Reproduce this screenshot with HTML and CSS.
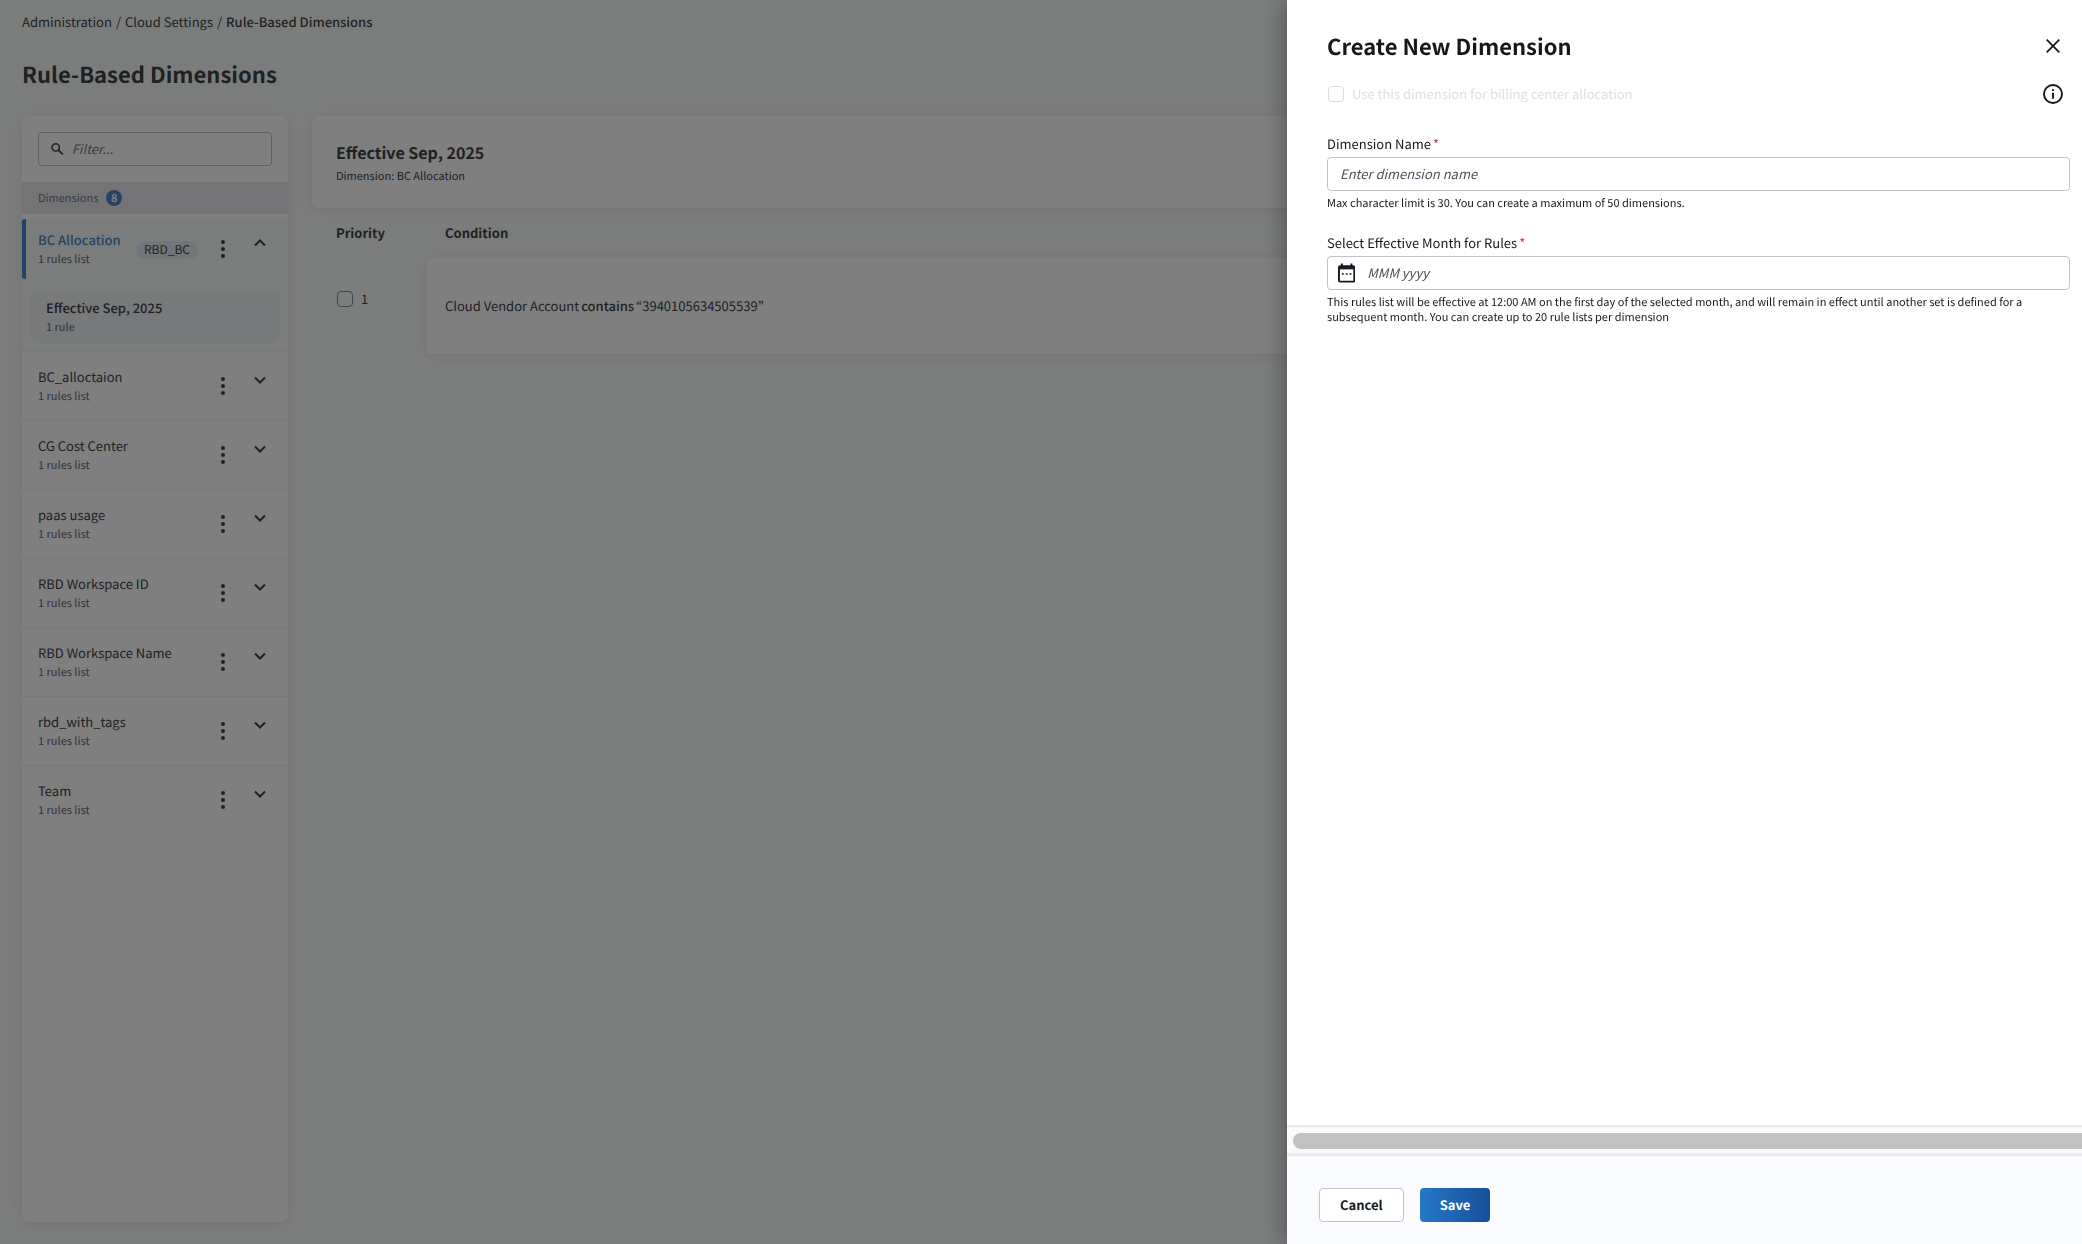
FILE: index.html
```
<!DOCTYPE html>
<html lang="en">
<head>
    <meta charset="UTF-8">
    <meta name="viewport" content="width=device-width, initial-scale=1">
    <title>Rule-Based Dimensions</title>
    <link rel="stylesheet" href="styles.css">
</head>
<body>

<!-- Shared icons -->
<svg class="icon-defs" width="0" height="0" aria-hidden="true">
    <symbol id="icon-dots" viewBox="0 0 4 18">
        <circle cx="2" cy="2" r="2"/><circle cx="2" cy="9" r="2"/><circle cx="2" cy="16" r="2"/>
    </symbol>
    <symbol id="icon-chevron" viewBox="0 0 12 8">
        <path d="M1 1.5l5 5 5-5" fill="none" stroke="currentColor" stroke-width="2"/>
    </symbol>
</svg>

<div class="page">
    <nav class="breadcrumb" aria-label="Breadcrumb">
        <a href="#">Administration</a>
        <span>/</span>
        <a href="#">Cloud Settings</a>
        <span>/</span>
        <strong>Rule-Based Dimensions</strong>
    </nav>

    <h1 class="page-title">Rule-Based Dimensions</h1>

    <div class="layout">
        <aside class="sidebar">
            <div class="filter">
                <svg width="14" height="14" viewBox="0 0 14 14" aria-hidden="true"><circle cx="5.2" cy="5.2" r="4.1" fill="none" stroke="currentColor" stroke-width="1.7"/><path d="M8.2 8.2l4.8 4.8" stroke="currentColor" stroke-width="2"/></svg>
                <input type="text" aria-label="Filter dimensions" placeholder="Filter...">
            </div>
            <div class="list-head">Dimensions <span class="count">8</span></div>

            <ul class="dimensions">
                <li class="dimension active">
                    <div class="row">
                        <div class="name"><strong>BC Allocation</strong><small>1 rules list</small></div>
                        <span class="tag">RBD_BC</span>
                        <button class="menu" aria-label="Actions"><svg width="4" height="18"><use href="#icon-dots"/></svg></button>
                        <button class="toggle" aria-label="Collapse"><svg width="12" height="8"><use href="#icon-chevron"/></svg></button>
                    </div>
                    <a class="rules-list" href="#"><strong>Effective Sep, 2025</strong><small>1 rule</small></a>
                </li>
                <li class="dimension">
                    <div class="row">
                        <div class="name"><span>BC_alloctaion</span><small>1 rules list</small></div>
                        <button class="menu" aria-label="Actions"><svg width="4" height="18"><use href="#icon-dots"/></svg></button>
                        <button class="toggle" aria-label="Expand"><svg width="12" height="8"><use href="#icon-chevron"/></svg></button>
                    </div>
                </li>
                <li class="dimension">
                    <div class="row">
                        <div class="name"><span>CG Cost Center</span><small>1 rules list</small></div>
                        <button class="menu" aria-label="Actions"><svg width="4" height="18"><use href="#icon-dots"/></svg></button>
                        <button class="toggle" aria-label="Expand"><svg width="12" height="8"><use href="#icon-chevron"/></svg></button>
                    </div>
                </li>
                <li class="dimension">
                    <div class="row">
                        <div class="name"><span>paas usage</span><small>1 rules list</small></div>
                        <button class="menu" aria-label="Actions"><svg width="4" height="18"><use href="#icon-dots"/></svg></button>
                        <button class="toggle" aria-label="Expand"><svg width="12" height="8"><use href="#icon-chevron"/></svg></button>
                    </div>
                </li>
                <li class="dimension">
                    <div class="row">
                        <div class="name"><span>RBD Workspace ID</span><small>1 rules list</small></div>
                        <button class="menu" aria-label="Actions"><svg width="4" height="18"><use href="#icon-dots"/></svg></button>
                        <button class="toggle" aria-label="Expand"><svg width="12" height="8"><use href="#icon-chevron"/></svg></button>
                    </div>
                </li>
                <li class="dimension">
                    <div class="row">
                        <div class="name"><span>RBD Workspace Name</span><small>1 rules list</small></div>
                        <button class="menu" aria-label="Actions"><svg width="4" height="18"><use href="#icon-dots"/></svg></button>
                        <button class="toggle" aria-label="Expand"><svg width="12" height="8"><use href="#icon-chevron"/></svg></button>
                    </div>
                </li>
                <li class="dimension">
                    <div class="row">
                        <div class="name"><span>rbd_with_tags</span><small>1 rules list</small></div>
                        <button class="menu" aria-label="Actions"><svg width="4" height="18"><use href="#icon-dots"/></svg></button>
                        <button class="toggle" aria-label="Expand"><svg width="12" height="8"><use href="#icon-chevron"/></svg></button>
                    </div>
                </li>
                <li class="dimension">
                    <div class="row">
                        <div class="name"><span>Team</span><small>1 rules list</small></div>
                        <button class="menu" aria-label="Actions"><svg width="4" height="18"><use href="#icon-dots"/></svg></button>
                        <button class="toggle" aria-label="Expand"><svg width="12" height="8"><use href="#icon-chevron"/></svg></button>
                    </div>
                </li>
            </ul>
        </aside>

        <main class="content">
            <header class="summary">
                <h2>Effective Sep, 2025</h2>
                <p>Dimension: BC Allocation</p>
            </header>

            <table class="rules">
                <thead>
                    <tr><th class="priority">Priority</th><th>Condition</th></tr>
                </thead>
                <tbody>
                    <tr>
                        <td class="priority"><label class="check"><input type="checkbox"> 1</label></td>
                        <td><div class="rule"><span>Cloud Vendor Account</span> <strong>contains</strong> <span>“3940105634505539”</span></div></td>
                    </tr>
                </tbody>
            </table>
        </main>
    </div>
</div>

<div class="overlay"></div>

<!-- Create dimension drawer -->
<form class="drawer" role="dialog" aria-labelledby="drawer-title">
    <div class="drawer-body">
        <div class="drawer-head">
            <h2 id="drawer-title">Create New Dimension</h2>
            <button type="button" class="icon-button" aria-label="Close"><svg width="14" height="14" viewBox="0 0 14 14"><path d="M.7.7l12.6 12.6M13.3.7L.7 13.3" stroke="currentColor" stroke-width="1.7"/></svg></button>
        </div>

        <div class="billing">
            <label class="check disabled"><input type="checkbox" disabled> Use this dimension for billing center allocation</label>
            <button type="button" class="icon-button" aria-label="Information"><svg width="20" height="20" viewBox="0 0 20 20"><circle cx="10" cy="10" r="9" fill="none" stroke="currentColor" stroke-width="1.9"/><path d="M10 8.7v6M10 5.2v1.9" stroke="currentColor" stroke-width="1.9"/></svg></button>
        </div>

        <div class="field">
            <label for="dimension-name">Dimension Name <span class="required">*</span></label>
            <div class="control"><input type="text" id="dimension-name" placeholder="Enter dimension name"></div>
            <p>Max character limit is 30. You can create a maximum of 50 dimensions.</p>
        </div>

        <div class="field">
            <label for="month">Select Effective Month for Rules <span class="required">*</span></label>
            <div class="control with-icon">
                <svg width="18" height="20" viewBox="0 0 18 20" aria-hidden="true"><rect x="1" y="3" width="16" height="16" rx="1.2" fill="none" stroke="currentColor" stroke-width="2"/><path d="M1 5h16" stroke="currentColor" stroke-width="2.4"/><path d="M4 0v4M14 0v4" stroke="currentColor" stroke-width="2"/><path d="M4 11h2M8 11h2M12 11h2" stroke="currentColor" stroke-width="1.6"/></svg>
                <input type="text" id="month" placeholder="MMM yyyy">
            </div>
            <p>This rules list will be effective at 12:00 AM on the first day of the selected month, and will remain in effect until another set is defined for a subsequent month. You can create up to 20 rule lists per dimension</p>
        </div>
    </div>

    <div class="scrollbar"><div class="thumb"></div></div>

    <div class="drawer-foot">
        <button type="button" class="button">Cancel</button>
        <button type="submit" class="button primary">Save</button>
    </div>
</form>

</body>
</html>
```
FILE: styles.css
```
* {
    box-sizing: border-box;
}

body {
    margin: 0;
    font-family: "Noto Sans CJK KR", "Noto Sans", sans-serif;
    font-size: 13px;
    line-height: 20px;
    color: #14181a;
    background-color: #f7fbf8;
    text-rendering: geometricPrecision;
    overflow: hidden;
}

h1, h2, p, ul {
    margin: 0;
    padding: 0;
}

a {
    color: inherit;
    text-decoration: none;
}

strong {
    font-weight: 500;
}

button, input {
    font: inherit;
    color: inherit;
    text-rendering: inherit;
}

button {
    padding: 0;
    border: none;
    background: none;
    cursor: pointer;
}

svg {
    display: block;
    fill: currentColor;
}

.icon-defs {
    position: absolute;
}

/* Page behind the drawer */
.page {
    display: flex;
    flex-direction: column;
    height: 100vh;
    padding: 12px 22px 22px;
    color: #3e4246;
}

.breadcrumb {
    display: flex;
    gap: 4px;
}

.page-title {
    margin: 22px 0;
    font-size: 22px;
    line-height: 40px;
}

.layout {
    display: flex;
    flex: 1;
    gap: 24px;
}

.sidebar {
    width: 266px;
    background-color: #fff;
    border-radius: 8px;
    box-shadow: 0 2px 16px rgba(60, 40, 50, 0.1);
}

.filter {
    display: flex;
    align-items: center;
    gap: 8px;
    height: 34px;
    margin: 16px;
    padding-left: 12px;
    border: 1px solid #b9bfc8;
    border-radius: 4px;
}

.filter input, .control input {
    width: 100%;
    padding: 0;
    border: none;
    outline: none;
    background: none;
}

::placeholder {
    color: #4b5055;
    font-style: italic;
    opacity: 1;
}

.filter ::placeholder {
    color: #7c8085;
}

.list-head {
    display: flex;
    align-items: center;
    gap: 8px;
    height: 32px;
    padding: 0 16px;
    font-size: 11px;
    color: #74777e;
    background-color: #e9e8ee;
}

.count {
    width: 16px;
    border-radius: 8px;
    line-height: 16px;
    text-align: center;
    font-weight: bold;
    color: #fff;
    background-color: #4a86cc;
}

.dimensions {
    list-style: none;
}

.dimension {
    border-bottom: 1px solid #f0f0f2;
}

.dimension:last-child {
    border-bottom: none;
}

.dimension.active {
    padding-bottom: 8px;
    background-color: #f7fbf8;
}

.row {
    display: flex;
    height: 68px;
    padding: 0 22px 0 16px;
}

.active .row {
    height: 60px;
    margin: 5px 0 12px;
    padding-left: 12px;
    border-left: 4px solid #4a86cc;
    border-radius: 3px 0 0 3px;
}

.name {
    flex: 1;
    padding-top: 15px;
}

.active .name {
    padding-top: 11px;
    color: #4a86cc;
}

.name span, .name strong, .rules-list strong {
    display: block;
}

small {
    display: block;
    font-size: 11px;
    line-height: 18px;
    color: #666a6f;
}

.tag {
    align-self: center;
    margin: 2px 23px 0 0;
    padding: 0 8px;
    border-radius: 9px;
    font-size: 12px;
    line-height: 18px;
    background-color: #e4ebf4;
}

.menu {
    width: 4px;
    margin-right: 29px;
}

.toggle {
    padding-bottom: 12px;
}

.active .toggle svg {
    transform: rotate(180deg);
}

.rules-list {
    display: block;
    height: 52px;
    margin: 0 8px;
    padding: 7px 16px;
    border-radius: 8px;
    background-color: #f1f2f7;
}

.content {
    flex: 1;
}

.summary {
    height: 92px;
    padding: 24px;
    background-color: #fff;
    border-radius: 8px;
    box-shadow: 0 2px 16px rgba(60, 40, 50, 0.1);
}

.summary h2 {
    font-size: 16px;
    line-height: 24px;
}

.summary p {
    font-size: 11px;
    line-height: 24px;
}

.rules {
    width: 100%;
    border-collapse: collapse;
    text-align: left;
}

.rules th {
    height: 50px;
    padding: 0 0 0 18px;
}

.rules td {
    padding: 0;
    vertical-align: top;
}

.rules .priority {
    width: 115px;
    padding-left: 24px;
}

.rules td.priority {
    padding-top: 31px;
}

.rule {
    display: flex;
    gap: 2px;
    padding: 38px 18px;
    background-color: #fff;
    border-radius: 4px;
    box-shadow: 0 2px 16px rgba(60, 40, 50, 0.1);
}

.check {
    display: flex;
    align-items: center;
    gap: 8px;
}

.check input {
    appearance: none;
    width: 16px;
    height: 16px;
    margin: 0 0 0 1px;
    border: 1px solid #85898e;
    border-radius: 4px;
}

.check.disabled {
    color: #dcdfe5;
}

.check.disabled input {
    border-color: #d9dce2;
}

.overlay {
    position: fixed;
    inset: 0;
    background-color: rgba(0, 0, 0, 0.5);
}

/* Drawer */
.drawer {
    position: fixed;
    top: 0;
    right: 0;
    bottom: 0;
    display: flex;
    flex-direction: column;
    width: 795px;
    background-color: #fff;
    box-shadow: 0 0 24px rgba(0, 0, 0, 0.4);
}

.drawer-body {
    flex: 1;
    padding: 26px 12px 0 40px;
}

.drawer-head, .billing {
    display: flex;
    align-items: center;
    justify-content: space-between;
}

.drawer-head h2 {
    font-size: 22px;
    line-height: 40px;
}

.icon-button {
    display: flex;
    justify-content: center;
    width: 34px;
}

.billing {
    height: 40px;
    margin: 8px 0 20px;
}

.field {
    margin-bottom: 22px;
}

.field label {
    display: flex;
    gap: 2px;
}

.required {
    color: #c4314b;
}

.control {
    display: flex;
    align-items: center;
    height: 34px;
    margin: 3px 0 5px;
    padding: 0 12px;
    border: 1px solid #bfc4cc;
    border-radius: 4px;
}

.with-icon {
    gap: 12px;
    padding-left: 10px;
}

.field p {
    font-size: 11px;
    line-height: 15px;
}

.scrollbar {
    height: 30px;
    padding: 6px 0 4px 6px;
    border-top: 2px solid #e8e8e8;
    border-bottom: 2px solid #ebebeb;
    background-color: #fafafa;
    overflow: hidden;
}

.thumb {
    height: 16px;
    border-radius: 8px 0 0 8px;
    background-color: #c1c1c1;
}

.drawer-foot {
    display: flex;
    gap: 16px;
    padding: 32px 32px 22px;
    border-top: 1px solid #e1e4e8;
    background-color: #fafbfe;
}

.button {
    height: 34px;
    padding: 0 20px;
    border: 1px solid #bfc4cc;
    border-radius: 4px;
    font-weight: bold;
    background-color: #fff;
}

.primary {
    border: none;
    color: #fff;
    background: linear-gradient(to right, #2678c8, #174f9a);
}
```
